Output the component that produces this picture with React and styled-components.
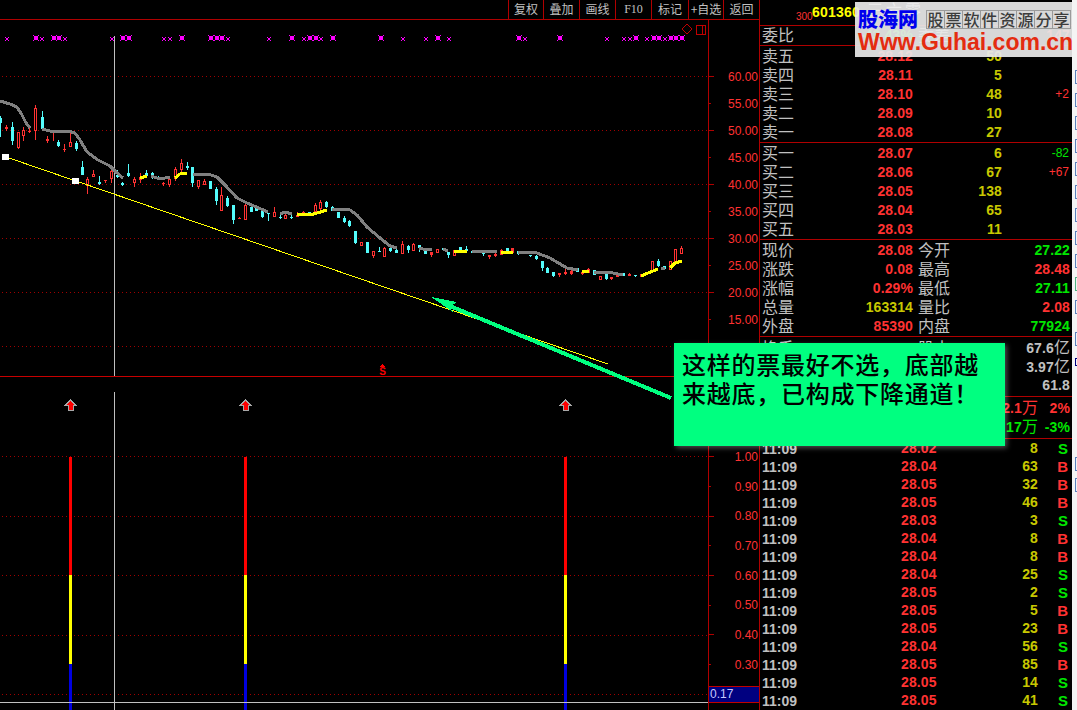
import React from "react";
import styled, { createGlobalStyle } from "styled-components";

const RED = "#ff3232";
const LINE = "#b00000";
const GRAY = "#c0c0c0";
const YEL = "#c8c800";
const GRN = "#00e600";
const CYAN = "#54fcfc";
const NUM = '"Liberation Sans", Arial, sans-serif';
const CJK = '"Noto Sans CJK SC", "Noto Sans", sans-serif';

const Global = createGlobalStyle`
  html, body { margin: 0; padding: 0; background: #000; overflow: hidden; }
  #root { width: 1077px; height: 710px; }
`;

const Screen = styled.div`
  position: relative;
  display: flex;
  width: 1077px;
  height: 710px;
  background: #000;
  overflow: hidden;
  font-family: ${CJK};
`;
const LeftSide = styled.div`
  display: flex;
  flex-direction: column;
  width: 760px;
  flex: none;
`;
const Toolbar = styled.div`
  display: flex;
  justify-content: flex-end;
  height: 20px;
  box-sizing: border-box;
  border-bottom: 1px solid ${LINE};
  border-right: 1px solid ${LINE};
`;
const ToolButton = styled.div`
  width: ${(p) => p.$w || 36}px;
  box-sizing: border-box;
  border-left: 1px solid ${LINE};
  color: ${GRAY};
  font-size: 12px;
  line-height: 18px;
  text-align: center;
  white-space: nowrap;
  font-family: ${(p) => (p.$serif ? '"Liberation Serif", serif' : CJK)};
`;
const Pane = styled.div`
  display: flex;
  height: ${(p) => p.$h}px;
  box-sizing: border-box;
  border-bottom: ${(p) => (p.$rule ? "1px solid #c80000" : "none")};
`;
const ChartSvg = styled.svg`
  display: block;
  width: 708px;
  flex: none;
  shape-rendering: crispEdges;
`;
const Axis = styled.div`
  position: relative;
  width: 52px;
  box-sizing: border-box;
  border-left: 1px solid ${LINE};
  border-right: 1px solid ${LINE};
  padding-top: ${(p) => p.$top}px;
`;
const AxisRow = styled.div`
  display: flex;
  align-items: center;
  justify-content: space-between;
  height: ${(p) => p.$h}px;
  padding-right: 1px;
`;
const TickMark = styled.i`
  display: block;
  height: 1px;
  width: ${(p) => (p.$major ? 5 : 2)}px;
  background: ${LINE};
`;
const AxisText = styled.span`
  color: ${RED};
  font: 12px ${NUM};
`;
const CrossLabel = styled.div`
  position: absolute;
  left: 0;
  right: 0;
  top: 309px;
  height: 17px;
  box-sizing: border-box;
  border-top: 1px solid #c00000;
  border-bottom: 1px solid #c00000;
  background: #000080;
  color: #c8c8ff;
  font: 12px/15px ${NUM};
  padding-left: 1px;
`;

const Panel = styled.div`
  width: 312px;
  flex: none;
  display: flex;
  flex-direction: column;
`;
const Section = styled.div`
  height: ${(p) => p.$h}px;
  box-sizing: border-box;
  padding-top: ${(p) => p.$pad ?? 0}px;
  border-bottom: ${(p) => (p.$open ? "none" : `1px solid ${LINE}`)};
  flex: none;
`;
const Title = styled.div`
  display: flex;
  align-items: flex-start;
  padding: 3px 0 0 36px;
  white-space: nowrap;
`;
const Market = styled.span`
  width: 16px;
  flex: none;
  color: ${RED};
  font: 10px/12px ${NUM};
  margin-top: 8px;
`;
const Code = styled.span`
  color: #ffff00;
  font: bold 14px/18px ${NUM};
  letter-spacing: 0.2px;
  margin-right: 7px;
`;
const StockName = styled.span`
  color: #ffffff;
  font-size: 16px;
  letter-spacing: 3px;
  line-height: 12px;
`;
const OrderRow = styled.div`
  display: grid;
  grid-template-columns: 153px 89px 67px;
  align-items: center;
  height: 19px;
`;
const QuoteRow = styled.div`
  display: grid;
  grid-template-columns: 153px 37px 120px;
  align-items: center;
  height: 19px;
`;
const LabelValue = styled.div`
  display: flex;
  align-items: center;
  justify-content: space-between;
  padding-left: 2px;
`;
const Label = styled.span`
  color: ${GRAY};
  font-size: 16px;
  line-height: 17px;
  padding-bottom: 2px;
  white-space: nowrap;
  padding-left: ${(p) => p.$inset || 0}px;
`;
const Num = styled.span`
  color: ${(p) => p.$c || RED};
  font: bold 14px/19px ${NUM};
  text-align: right;
  white-space: nowrap;
  letter-spacing: 0.1px;
  grid-column: ${(p) => p.$col || "auto"};
`;
const Delta = styled.span`
  color: ${(p) => p.$c || RED};
  font: 12px/19px ${NUM};
  text-align: right;
`;
const Unit = styled.span`
  font-family: ${CJK};
  font-weight: 400;
  font-size: 16px;
  line-height: 17px;
`;
const FlowRow = styled.div`
  display: grid;
  grid-template-columns: 278px 32px;
  align-items: center;
  height: 19px;
`;
const TradeRow = styled.div`
  display: grid;
  grid-template-columns: 139px 35px 102px 30px;
  align-items: center;
  height: 18px;
  padding-left: 2px;
`;
const Clock = styled.span`
  color: ${GRAY};
  font: bold 14px/18px ${NUM};
`;
const Side = styled.span`
  color: ${(p) => (p.$s === "S" ? GRN : RED)};
  font: bold 15px/18px ${NUM};
  text-align: right;
`;

const EdgeStrip = styled.div`
  flex: 1;
  background: #f4f4f4;
  padding: 70px 0 0 3px;
`;
const EdgeBox = styled.div`
  height: ${(p) => p.$h || 14}px;
  box-sizing: border-box;
  border: 1px solid ${(p) => p.$c || "#5a80bc"};
  border-right: none;
  margin-bottom: ${(p) => p.$gap ?? 9}px;
`;

const Watermark = styled.div`
  position: absolute;
  left: 855px;
  top: 2px;
  width: 217px;
  height: 55px;
  background: rgba(232, 232, 232, 0.93);
  display: flex;
  flex-direction: column;
  padding: 6px 0 0 3px;
  box-sizing: border-box;
`;
const BrandRow = styled.div`
  display: flex;
  align-items: center;
  height: 22px;
`;
const Brand = styled.span`
  color: #0000ee;
  font-size: 20px;
  font-weight: 900;
  line-height: 20px;
  width: 68px;
`;
const Slogan = styled.div`
  display: flex;
  border: 1px solid #9a9a9a;
`;
const SloganCell = styled.span`
  width: 17px;
  height: 17px;
  border-right: 1px solid #9a9a9a;
  color: #3c3c3c;
  font-size: 16px;
  font-weight: 500;
  line-height: 17px;
  text-align: center;
  &:last-child { border-right: none; }
`;
const Site = styled.div`
  color: #e42c10;
  font: bold 23px/24px ${NUM};
  white-space: nowrap;
  margin-top: 0;
`;

const Callout = styled.div`
  position: absolute;
  left: 674px;
  top: 343px;
  width: 331px;
  height: 103px;
  box-sizing: border-box;
  padding: 6px 0 0 8px;
  background: #00ff80;
  box-shadow: 2px 2px 5px rgba(255, 255, 255, 0.3);
  color: #000;
  font-size: 24px;
  line-height: 29px;
  letter-spacing: 0.75px;
  font-weight: 500;
  white-space: nowrap;
`;
const ArrowLayer = styled.svg`
  position: absolute;
  left: 0;
  top: 0;
  width: 1077px;
  height: 710px;
  pointer-events: none;
  shape-rendering: crispEdges;
`;

/* candles noted in 3x crop coordinates: [x, wickTop, bodyTop, bodyBottom, wickBottom, kind] */
const groupA = [
  [1,78,85,100,140,"c"],[19,105,110,118,122,"f"],[37,97,110,152,165,"c"],[55,128,128,172,177,"h"],
  [70,110,122,137,152,"h"],[87,115,122,125,128,"f"],[106,45,55,122,150,"h"],[125,63,82,118,122,"c"],
  [142,138,148,153,158,"f"],[159,125,125,127,152,"f"],[175,150,157,168,172,"c"],[193,163,176,178,185,"f"],
  [211,130,157,170,170,"h"],[229,153,158,178,182,"c"],[247,213,232,255,255,"c"],[262,262,267,285,312,"h"],
  [280,240,253,260,260,"h"],[298,258,275,282,285,"c"],[316,270,270,274,280,"f"],[334,238,245,265,278,"h"],
  [352,240,255,261,265,"c"],[367,275,280,284,288,"c"],[385,222,250,258,262,"c"],[403,262,268,278,290,"h"],
  [421,250,262,270,278,"f"],[439,240,250,258,258,"c"],[455,246,250,262,266,"c"],[473,258,262,270,270,"c"],
  [490,275,278,281,288,"f"],[508,258,268,282,290,"h"],[526,232,238,265,272,"h"],[544,208,220,237,245,"h"],
  [560,216,228,235,240,"c"],[577,232,232,278,290,"c"],[595,270,270,288,298,"h"],[613,268,273,282,282,"h"],
  [630,273,273,297,297,"c"],[649,290,297,332,345,"c"],[664,290,315,360,360,"h"],[682,318,323,348,350,"c"],
  [700,345,345,390,402,"c"],[718,381,384,388,388,"f"],[736,340,345,387,390,"h"],[752,348,350,365,365,"c"],
  [769,352,355,364,364,"c"],[787,360,362,380,385,"c"],[805,368,370,373,392,"c"],[823,352,367,380,380,"h"],
  [841,372,380,382,388,"c"],[856,364,375,386,386,"h"],[874,375,380,382,388,"c"],[892,365,375,380,382,"f"],
  [910,363,366,372,372,"f"],[928,365,367,376,376,"c"],[946,340,345,365,370,"h"],[961,330,336,355,360,"h"],
  [979,333,337,350,355,"c"],[997,348,352,362,362,"c"],[1015,365,365,385,385,"c"],[1033,378,385,395,400,"c"],
].map(([x, a, b, c, d, k]) => [Math.round(x / 3), 90 + a / 3, 90 + b / 3, 90 + c / 3, 90 + d / 3, k]);

const groupB = [
  [13,78,90,97,100,"c"],[28,90,92,108,110,"c"],[46,123,123,160,162,"c"],[64,156,156,165,168,"h"],
  [82,156,156,188,188,"c"],[100,184,184,195,204,"h"],[118,170,183,186,186,"c"],[133,170,174,198,200,"h"],
  [151,170,173,184,186,"c"],[169,176,180,190,190,"c"],[187,153,162,190,190,"h"],[205,165,167,180,188,"c"],
  [220,160,162,182,182,"h"],[238,165,166,175,186,"c"],[256,183,183,193,193,"c"],[274,186,186,194,200,"f"],
  [292,178,178,188,188,"h"],[310,175,175,180,180,"c"],[325,186,186,195,204,"c"],[343,180,180,197,197,"h"],
  [361,170,172,180,180,"c"],[379,168,176,182,182,"c"],[397,180,182,190,190,"c"],[430,188,190,193,197,"c"],
  [448,194,196,200,206,"f"],[466,190,192,198,200,"f"],[484,178,180,193,193,"h"],[502,175,175,185,185,"c"],
  [517,175,175,188,188,"f"],[535,184,184,192,195,"c"],[553,184,184,190,190,"c"],[571,195,195,198,200,"c"],
  [589,195,197,207,210,"c"],[607,213,213,235,243,"c"],[622,231,233,250,250,"c"],[640,246,246,258,261,"c"],
  [658,250,250,254,262,"f"],[676,235,245,253,255,"f"],[694,240,243,252,255,"f"],[712,235,235,245,245,"c"],
  [727,246,246,251,255,"f"],[745,234,236,248,248,"f"],[763,240,240,255,255,"c"],[781,258,258,268,270,"h"],
  [799,250,253,267,270,"c"],[814,262,262,267,270,"f"],[832,254,254,260,260,"f"],[850,250,250,258,258,"c"],
  [868,250,252,257,258,"f"],[886,255,255,258,261,"c"],[904,253,253,262,262,"f"],[919,248,248,256,256,"c"],
  [937,213,213,240,240,"h"],[955,208,212,228,230,"c"],[973,228,228,236,236,"c"],[991,212,215,237,237,"h"],
  [1006,178,178,220,220,"h"],[1024,168,174,190,192,"h"],
].map(([x, a, b, c, d, k]) => [340 + Math.round(x / 3), 190 + a / 3, 190 + b / 3, 190 + c / 3, 190 + d / 3, k]);

const candles = [...groupA, ...groupB];

const maLines = [
  ["g","0,101 10,104 17,107 22,115 26,123 30,128"],
  ["g","42,129 50,131 68,131 75,133 80,140 87,152 98,160 110,166 116,172 123,178"],
  ["y","140,178 147,176"],
  ["g","151,176 160,179 170,177"],
  ["y","175,178 180,174 187,173"],
  ["g","193,174 208,174 217,177 225,185 237,198 247,203 268,212"],
  ["g","280,214 285,212 292,214"],
  ["y","297,214 310,215 317,213 327,210"],
  ["g","332,209 350,210 357,215 367,227 380,238 390,246 397,248"],
  ["g","419,248 423,249 432,249"],
  ["g","443,249 448,251"],
  ["y","454,251 467,251"],
  ["g","472,251 497,252"],
  ["y","501,252 513,252"],
  ["g","518,252 537,253 550,258 567,268 578,270"],
  ["y","582,271 589,272"],
  ["g","594,272 608,272 623,275"],
  ["y","641,276 648,273 658,269"],
  ["g","661,269 665,268"],
  ["y","670,268 675,263 682,261"],
];

const bigMarks = [36,54,59,123,129,182,211,217,222,292,310,316,333,381,438,519,560,636,654,659,671,676,682];
const smallMarks = [7,42,65,112,164,170,228,269,304,321,403,426,449,525,607,624,630,647,665];

const Mark = ({ x, big }) => {
  const half = big ? 2 : 1;
  const size = half * 2;
  const y = big ? 38 : 39;
  return (
    <g fill="#ff00ff">
      <rect x={x - half} y={y - half} width={size} height={size} />
      <rect x={x - half - 1} y={y - half - 1} width={1} height={1} />
      <rect x={x + half} y={y - half - 1} width={1} height={1} />
      <rect x={x - half - 1} y={y + half} width={1} height={1} />
      <rect x={x + half} y={y + half} width={1} height={1} />
    </g>
  );
};

const Candle = ({ d: [x, wt, bt, bb, wb, k] }) => {
  const color = k === "c" ? CYAN : RED;
  const hollow = k === "h";
  return (
    <g>
      <line x1={x + 0.5} x2={x + 0.5} y1={wt} y2={hollow ? bt : wb} stroke={color} />
      {hollow && <line x1={x + 0.5} x2={x + 0.5} y1={bb} y2={wb} stroke={color} />}
      <rect
        x={hollow ? x - 0.5 : x - 1}
        y={bt}
        width={hollow ? 2 : 3}
        height={Math.max(bb - bt, 1)}
        fill={hollow ? "#000" : color}
        stroke={hollow ? color : "none"}
      />
    </g>
  );
};

const Dotted = ({ y }) => (
  <line x1="2" x2="708" y1={y + 0.5} y2={y + 0.5} stroke="#a00000" strokeDasharray="1 3" />
);

const UpperChart = () => (
  <ChartSvg viewBox="0 20 708 356" height="356">
    {[76, 130, 184, 238, 292, 346].map((y) => <Dotted key={y} y={y} />)}
    <line x1="114.5" x2="114.5" y1="36" y2="376" stroke={GRAY} />
    {bigMarks.map((x) => <Mark key={x} x={x} big />)}
    {smallMarks.map((x) => <Mark key={x} x={x} />)}
    <polygon points="687,24 692,29 687,34 682,29" fill="none" stroke="#c00000" />
    <rect x="696.5" y="25.5" width="9" height="9" fill="none" stroke="#c00000" />
    <line x1="702.5" x2="702.5" y1="25" y2="35" stroke="#c00000" />
    {candles.map((d, i) => <Candle key={i} d={d} />)}
    {maLines.map(([c, pts], i) => (
      <polyline key={i} points={pts} fill="none" strokeWidth="3" stroke={c === "y" ? "#ffff00" : "#808080"} />
    ))}
    <line x1="9" y1="158" x2="608" y2="364" stroke="#ffff00" />
    <rect x="2" y="154" width="7" height="6" fill="#fff" />
    <rect x="72" y="178" width="7" height="6" fill="#fff" />
    <polygon points="382.5,364 385,367 380,367" fill="#ff0000" />
    <text x="382.5" y="375" fill="#ff0000" fontFamily='"Liberation Sans", sans-serif' fontWeight="700" fontSize="10" textAnchor="middle">S</text>
  </ChartSvg>
);

const barXs = [69, 244, 564];
const Signal = ({ x }) => (
  <g>
    <polygon
      points={`${x + 1.5},400 ${x + 6.5},405 ${x + 4},405 ${x + 4},410 ${x - 1},410 ${x - 1},405 ${x - 3.5},405`}
      fill="#ff0000"
      stroke="#a8a8a8"
    />
    <rect x={x} y="457" width="3" height="118" fill="#ff0000" />
    <rect x={x} y="575" width="3" height="89" fill="#ffff00" />
    <rect x={x} y="664" width="3" height="46" fill="#0000e0" />
  </g>
);

const LowerChart = () => (
  <ChartSvg viewBox="0 377 708 333" height="333">
    {[456, 516, 575, 635, 694].map((y) => <Dotted key={y} y={y} />)}
    {barXs.map((x) => <Signal key={x} x={x} />)}
    <line x1="114.5" x2="114.5" y1="392" y2="710" stroke={GRAY} />
    <line x1="0" x2="708" y1="702.5" y2="702.5" stroke={GRAY} />
  </ChartSvg>
);

const priceTicks = ["60.00","55.00","50.00","45.00","40.00","35.00","30.00","25.00","20.00","15.00"];
const ratioTicks = ["1.00","0.90","0.80","0.70","0.60","0.50","0.40","0.30"];

const tools = [
  { t: "复权", w: 35 }, { t: "叠加" }, { t: "画线" }, { t: "F10", serif: true },
  { t: "标记", w: 37 }, { t: "+自选", w: 35 }, { t: "返回" },
];

const asks = [
  ["卖五","28.12","50",""],["卖四","28.11","5",""],["卖三","28.10","48","+2"],
  ["卖二","28.09","10",""],["卖一","28.08","27",""],
];
const bids = [
  ["买一","28.07","6","-82"],["买二","28.06","67","+67"],["买三","28.05","138",""],
  ["买四","28.04","65",""],["买五","28.03","11",""],
];
const quotes = [
  ["现价","28.08",RED,"今开","27.22",GRN],
  ["涨跌","0.08",RED,"最高","28.48",RED],
  ["涨幅","0.29%",RED,"最低","27.11",GRN],
  ["总量","163314",YEL,"量比","2.08",RED],
  ["外盘","85390",RED,"内盘","77924",GRN],
];
const trades = [
  ["28.02","8","S"],["28.04","63","B"],["28.05","32","B"],["28.05","46","B"],["28.03","3","S"],
  ["28.04","8","B"],["28.04","8","B"],["28.04","25","S"],["28.05","2","S"],["28.05","5","B"],
  ["28.05","23","B"],["28.04","56","S"],["28.05","85","B"],["28.05","14","S"],["28.05","41","S"],
];
const slogan = "股票软件资源分享".split("");

const edgeItems = [
  {},{},{},{},{},{},{},{},{},{ c: "#50b080" },{ gap: 18 },{ gap: 12 },
  { c: "#000080", h: 8, gap: 91 },{ gap: 7 },{},
];

const Book = ({ rows }) =>
  rows.map(([l, p, v, d]) => (
    <OrderRow key={l}>
      <LabelValue>
        <Label>{l}</Label>
        <Num>{p}</Num>
      </LabelValue>
      <Num $c={YEL}>{v}</Num>
      <Delta $c={d.startsWith("-") ? GRN : RED}>{d}</Delta>
    </OrderRow>
  ));

export default function App() {
  return (
    <Screen>
      <Global />
      <LeftSide>
        <Toolbar>
          {tools.map((b) => (
            <ToolButton key={b.t} $w={b.w} $serif={b.serif}>{b.t}</ToolButton>
          ))}
        </Toolbar>
        <Pane $h={357} $rule>
          <UpperChart />
          <Axis $top={43}>
            {priceTicks.map((t, i) => (
              <AxisRow key={t} $h={27}>
                <TickMark $major={i % 2 === 0} />
                <AxisText>{t}</AxisText>
              </AxisRow>
            ))}
          </Axis>
        </Pane>
        <Pane $h={333}>
          <LowerChart />
          <Axis $top={65}>
            {ratioTicks.map((t, i) => (
              <AxisRow key={t} $h={29.7}>
                <TickMark $major={i % 2 === 0} />
                <AxisText>{t}</AxisText>
              </AxisRow>
            ))}
            <CrossLabel>0.17</CrossLabel>
          </Axis>
        </Pane>
      </LeftSide>

      <Panel>
        <Section $h={26}>
          <Title>
            <Market>300</Market>
            <Code>601360</Code>
            <StockName>三六零</StockName>
          </Title>
        </Section>
        <Section $h={20}>
          <QuoteRow>
            <LabelValue><Label>委比</Label><Num $c={GRN}>-43.43%</Num></LabelValue>
            <Label $inset={5}>委差</Label>
            <Num>147</Num>
          </QuoteRow>
        </Section>
        <Section $h={97} $pad={1}><Book rows={asks} /></Section>
        <Section $h={97} $pad={1}><Book rows={bids} /></Section>
        <Section $h={97} $pad={1}>
          {quotes.map(([a, av, ac, b, bv, bc]) => (
            <QuoteRow key={a}>
              <LabelValue><Label>{a}</Label><Num $c={ac}>{av}</Num></LabelValue>
              <Label $inset={5}>{b}</Label>
              <Num $c={bc}>{bv}</Num>
            </QuoteRow>
          ))}
        </Section>
        <Section $h={60} $pad={1}>
          <QuoteRow>
            <LabelValue><Label>换手</Label><Num $c={YEL}>0.24%</Num></LabelValue>
            <Label $inset={5}>股本</Label>
            <Num $c={GRAY}>67.6<Unit>亿</Unit></Num>
          </QuoteRow>
          <QuoteRow>
            <Num $c={GRAY} $col="3">3.97<Unit>亿</Unit></Num>
          </QuoteRow>
          <QuoteRow>
            <Num $c={GRAY} $col="3">61.8</Num>
          </QuoteRow>
        </Section>
        <Section $h={42} $pad={1}>
          <FlowRow>
            <Num>2.1<Unit>万</Unit></Num>
            <Num>2%</Num>
          </FlowRow>
          <FlowRow>
            <Num $c={GRN}>17<Unit>万</Unit></Num>
            <Num $c={GRN}>-3%</Num>
          </FlowRow>
        </Section>
        <Section $h={271} $open>
          {trades.map(([p, v, s], i) => (
            <TradeRow key={i}>
              <Clock>11:09</Clock>
              <Num>{p}</Num>
              <Num $c={YEL}>{v}</Num>
              <Side $s={s}>{s}</Side>
            </TradeRow>
          ))}
        </Section>
      </Panel>

      <EdgeStrip>
        {edgeItems.map((b, i) => <EdgeBox key={i} $c={b.c} $h={b.h} $gap={b.gap} />)}
      </EdgeStrip>

      <ArrowLayer viewBox="0 0 1077 710">
        <line x1="450" y1="306" x2="671" y2="398" stroke="#00ff80" strokeWidth="4" />
        <polygon points="431,297 457,302 450,307 453,312" fill="#00ff80" />
      </ArrowLayer>

      <Callout>
        这样的票最好不选，底部越
        <br />
        来越底，已构成下降通道！
      </Callout>

      <Watermark>
        <BrandRow>
          <Brand>股海网</Brand>
          <Slogan>
            {slogan.map((c, i) => <SloganCell key={i}>{c}</SloganCell>)}
          </Slogan>
        </BrandRow>
        <Site>Www.Guhai.com.cn</Site>
      </Watermark>
    </Screen>
  );
}
